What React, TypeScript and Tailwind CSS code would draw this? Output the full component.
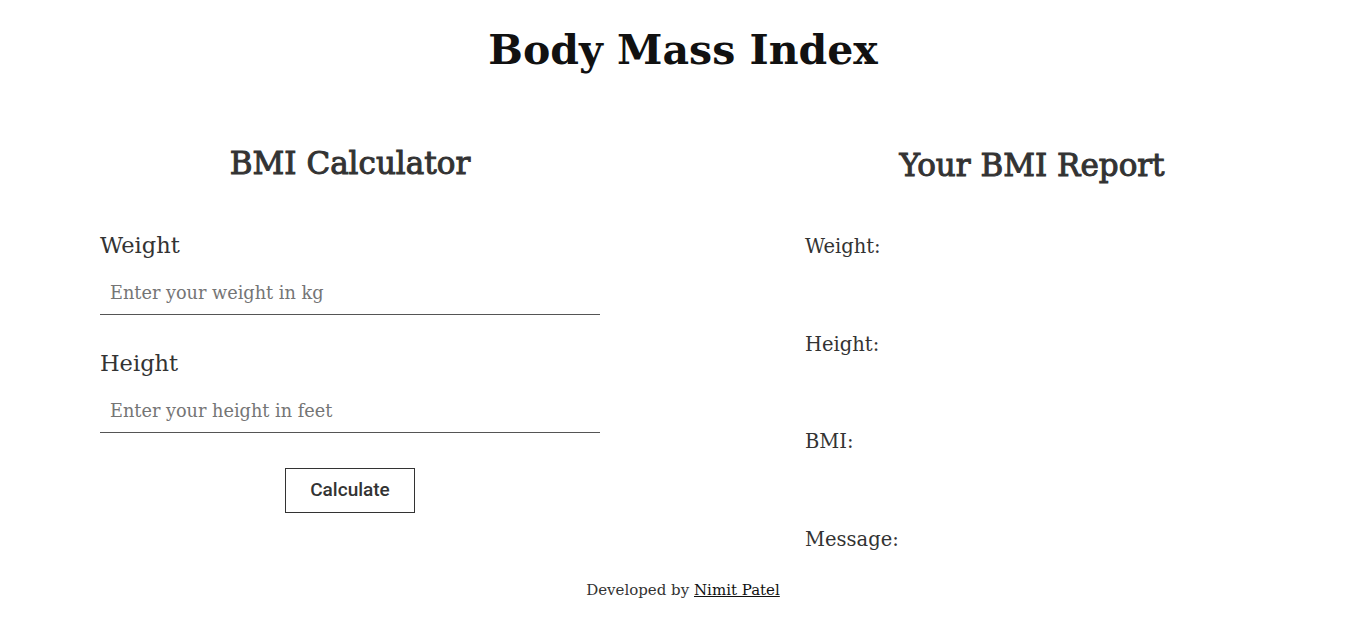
import React from "react";

export default function App() {
  return (
    <div className="min-h-[642px] bg-white font-['Roboto_Slab','DejaVu_Serif',serif] text-[#333]">
      <h1 className="pt-[26px] text-center text-[41px] font-bold leading-[48px] text-[#111]">
        Body Mass Index
      </h1>
      <div className="mt-[69px] flex items-start">
        <div className="ml-[100px] w-[500px]">
          <h2 className="text-center text-[31px] font-normal leading-[40px] text-[#333] [-webkit-text-stroke:1px_#333]">
            BMI Calculator
          </h2>
          <label className="mt-[47px] block text-[22.5px] leading-[30px]">Weight</label>
          <input
            type="text"
            placeholder="Enter your weight in kg"
            className="mt-[15px] block h-[40px] w-[500px] border-b border-[#555] px-[10px] pb-[4px] text-[17.7px] outline-none placeholder:text-[#757575]"
          />
          <label className="mt-[33px] block text-[22.5px] leading-[30px]">Height</label>
          <input
            type="text"
            placeholder="Enter your height in feet"
            className="mt-[15px] block h-[40px] w-[500px] border-b border-[#555] px-[10px] pb-[4px] text-[17.7px] outline-none placeholder:text-[#757575]"
          />
          <div className="mt-[35px] flex justify-center">
            <button className="h-[45px] w-[130px] border border-[#333] font-['Roboto',sans-serif] text-[19px] font-medium text-[#333]">
              Calculate
            </button>
          </div>
        </div>
        <div className="ml-[205px] w-[454px]">
          <h2 className="mt-[2px] text-center text-[31px] font-normal leading-[40px] text-[#333] [-webkit-text-stroke:1px_#333]">
            Your BMI Report
          </h2>
          <p className="mt-[48px] text-[19.5px] leading-[28px]">Weight:</p>
          <p className="mt-[70px] text-[19.5px] leading-[28px]">Height:</p>
          <p className="mt-[69px] text-[19.5px] leading-[28px]">BMI:</p>
          <p className="mt-[70px] text-[19.5px] leading-[28px]">Message:</p>
        </div>
      </div>
      <footer className="mt-[26px] text-center text-[15px] leading-[20px] text-[#333]">
        Developed by{" "}
        <a href="#" className="text-[#111] underline">
          Nimit Patel
        </a>
      </footer>
    </div>
  );
}
